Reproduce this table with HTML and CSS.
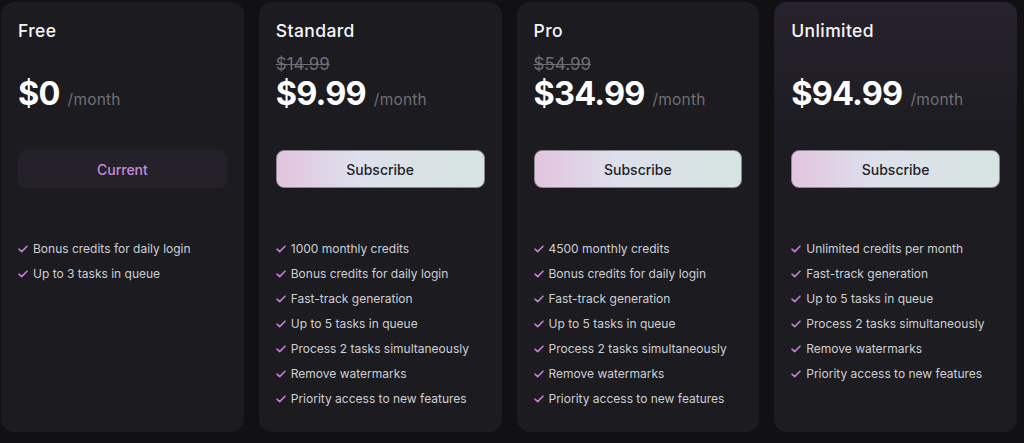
FILE: index.html
```html
<!DOCTYPE html>
<html>
<head>
<meta charset="utf-8">
<link rel="stylesheet" href="styles.css">
</head>
<body>
<div class="plans">
  <div class="card">
    <div class="title">Free</div>
    <div class="old empty">&nbsp;</div>
    <div class="price"><span class="amount">$0</span><span class="per">/month</span></div>
    <button class="btn current">Current</button>
    <ul class="features">
      <li><svg class="check" viewBox="0 0 10 8"><path d="M1 4.2 L3.7 6.6 L9 1.2"/></svg>Bonus credits for daily login</li>
      <li><svg class="check" viewBox="0 0 10 8"><path d="M1 4.2 L3.7 6.6 L9 1.2"/></svg>Up to 3 tasks in queue</li>
    </ul>
  </div>
  <div class="card">
    <div class="title">Standard</div>
    <div class="old">$14.99</div>
    <div class="price"><span class="amount">$9.99</span><span class="per">/month</span></div>
    <button class="btn subscribe">Subscribe</button>
    <ul class="features">
      <li><svg class="check" viewBox="0 0 10 8"><path d="M1 4.2 L3.7 6.6 L9 1.2"/></svg>1000 monthly credits</li>
      <li><svg class="check" viewBox="0 0 10 8"><path d="M1 4.2 L3.7 6.6 L9 1.2"/></svg>Bonus credits for daily login</li>
      <li><svg class="check" viewBox="0 0 10 8"><path d="M1 4.2 L3.7 6.6 L9 1.2"/></svg>Fast-track generation</li>
      <li><svg class="check" viewBox="0 0 10 8"><path d="M1 4.2 L3.7 6.6 L9 1.2"/></svg>Up to 5 tasks in queue</li>
      <li><svg class="check" viewBox="0 0 10 8"><path d="M1 4.2 L3.7 6.6 L9 1.2"/></svg>Process 2 tasks simultaneously</li>
      <li><svg class="check" viewBox="0 0 10 8"><path d="M1 4.2 L3.7 6.6 L9 1.2"/></svg>Remove watermarks</li>
      <li><svg class="check" viewBox="0 0 10 8"><path d="M1 4.2 L3.7 6.6 L9 1.2"/></svg>Priority access to new features</li>
    </ul>
  </div>
  <div class="card">
    <div class="title">Pro</div>
    <div class="old">$54.99</div>
    <div class="price"><span class="amount">$34.99</span><span class="per">/month</span></div>
    <button class="btn subscribe">Subscribe</button>
    <ul class="features">
      <li><svg class="check" viewBox="0 0 10 8"><path d="M1 4.2 L3.7 6.6 L9 1.2"/></svg>4500 monthly credits</li>
      <li><svg class="check" viewBox="0 0 10 8"><path d="M1 4.2 L3.7 6.6 L9 1.2"/></svg>Bonus credits for daily login</li>
      <li><svg class="check" viewBox="0 0 10 8"><path d="M1 4.2 L3.7 6.6 L9 1.2"/></svg>Fast-track generation</li>
      <li><svg class="check" viewBox="0 0 10 8"><path d="M1 4.2 L3.7 6.6 L9 1.2"/></svg>Up to 5 tasks in queue</li>
      <li><svg class="check" viewBox="0 0 10 8"><path d="M1 4.2 L3.7 6.6 L9 1.2"/></svg>Process 2 tasks simultaneously</li>
      <li><svg class="check" viewBox="0 0 10 8"><path d="M1 4.2 L3.7 6.6 L9 1.2"/></svg>Remove watermarks</li>
      <li><svg class="check" viewBox="0 0 10 8"><path d="M1 4.2 L3.7 6.6 L9 1.2"/></svg>Priority access to new features</li>
    </ul>
  </div>
  <div class="card featured">
    <div class="title">Unlimited</div>
    <div class="old empty">&nbsp;</div>
    <div class="price"><span class="amount">$94.99</span><span class="per">/month</span></div>
    <button class="btn subscribe">Subscribe</button>
    <ul class="features">
      <li><svg class="check" viewBox="0 0 10 8"><path d="M1 4.2 L3.7 6.6 L9 1.2"/></svg>Unlimited credits per month</li>
      <li><svg class="check" viewBox="0 0 10 8"><path d="M1 4.2 L3.7 6.6 L9 1.2"/></svg>Fast-track generation</li>
      <li><svg class="check" viewBox="0 0 10 8"><path d="M1 4.2 L3.7 6.6 L9 1.2"/></svg>Up to 5 tasks in queue</li>
      <li><svg class="check" viewBox="0 0 10 8"><path d="M1 4.2 L3.7 6.6 L9 1.2"/></svg>Process 2 tasks simultaneously</li>
      <li><svg class="check" viewBox="0 0 10 8"><path d="M1 4.2 L3.7 6.6 L9 1.2"/></svg>Remove watermarks</li>
      <li><svg class="check" viewBox="0 0 10 8"><path d="M1 4.2 L3.7 6.6 L9 1.2"/></svg>Priority access to new features</li>
    </ul>
  </div>
</div>
</body>
</html>
```

FILE: styles.css
```css
* { box-sizing: border-box; }
html, body {
  margin: 0;
  background: #111113;
}
body {
  padding: 2px 0 0 1px;
  font-family: "Inter", "Open Sans", sans-serif;
  color: #f4f4f5;
}
.plans {
  display: flex;
  gap: 15px;
}
.card {
  width: 242.75px;
  height: 430px;
  background: #1b1b20;
  border-radius: 13px;
  padding: 17px 17px 0 17px;
  display: flex;
  flex-direction: column;
}
.card.featured {
  background: linear-gradient(180deg, #27222d 0%, #1d1c22 30%, #1c1c21 100%);
}
.title {
  font-size: 17.5px;
  line-height: 24px;
  font-weight: 500;
  letter-spacing: 0.4px;
  color: #f6f6f7;
}
.old {
  margin-top: 10px;
  font-size: 17px;
  line-height: 22px;
  color: #6e6e73;
  text-decoration: line-through;
}
.old.empty { visibility: hidden; }
.price {
  display: flex;
  align-items: baseline;
  margin-top: -1px;
  height: 40px;
  line-height: 40px;
}
.amount {
  font-size: 32.5px;
  font-weight: 700;
  letter-spacing: -0.8px;
  color: #ffffff;
}
.per {
  margin-left: 8px;
  font-size: 15.5px;
  letter-spacing: 0.2px;
  color: #6f6f75;
}
.btn {
  margin-top: 36px;
  width: 100%;
  height: 38px;
  border-radius: 8px;
  font-family: inherit;
  font-size: 14px;
  font-weight: 500;
  cursor: pointer;
}
.btn.current {
  background: #25212b;
  border: none;
  color: #c88ad9;
}
.btn.subscribe {
  background: linear-gradient(90deg, #e3c4df 0%, #dde0ec 40%, #d6e4e0 100%);
  border: 1px solid #8a8a90;
  color: #232328;
}
.features {
  list-style: none;
  margin: 48px 0 0 0;
  padding: 0;
}
.features li {
  display: flex;
  align-items: center;
  height: 25px;
  font-size: 12px;
  color: #cfcfd3;
}
.check {
  width: 10px;
  height: 8px;
  margin-right: 5px;
  flex: none;
  fill: none;
  stroke: #c77dd8;
  stroke-width: 1.6;
  stroke-linecap: round;
  stroke-linejoin: round;
}
```
